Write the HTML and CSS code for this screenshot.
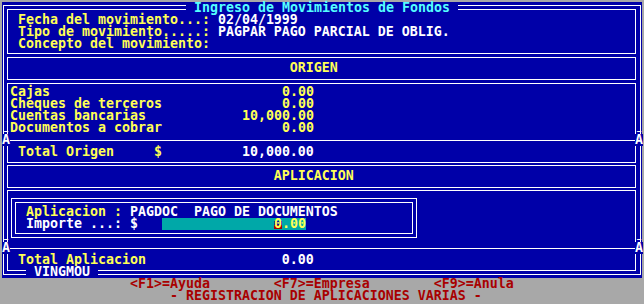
FILE: index.html
```html
<!DOCTYPE html>
<html>
<head>
<meta charset="utf-8">
<link rel="stylesheet" href="styles.css">
</head>
<body>
<div class="screen">
  <div class="main">
    <div class="frame">
      <div class="ttl">Ingreso de Movimientos de Fondos</div>
      <div class="box box-a">
        <div class="ln">  <span class="y">Fecha del movimiento...:</span> 02/04/1999</div>
        <div class="ln">  <span class="y">Tipo de movimiento.....:</span> PAGPAR PAGO PARCIAL DE OBLIG.</div>
        <div class="ln">  <span class="y">Concepto del movimiento:</span></div>
      </div>
      <div class="box box-b">
        <div class="ln y">                                    ORIGEN</div>
      </div>
      <div class="box box-c">
        <div class="ln y items"><span class="lbl">Cajas</span><span class="val">0.00</span></div>
        <div class="ln y items"><span class="lbl">Cheques de terceros</span><span class="val">0.00</span></div>
        <div class="ln y items"><span class="lbl">Cuentas bancarias</span><span class="val">10,000.00</span></div>
        <div class="ln y items"><span class="lbl">Documentos a cobrar</span><span class="val">0.00</span></div>
        <div class="sep"><span class="x">Ã</span><span class="bar"></span><span class="x">Ã</span></div>
        <div class="ln">  <span class="y">Total Origen     $</span>          10,000.00</div>
      </div>
      <div class="box box-d">
        <div class="ln y">                                  APLICACION</div>
      </div>
      <div class="box box-e">
        <div class="nest">
          <div class="nest-in">
            <div class="nl"><span class="y">Aplicacion :</span> PAGDOC  PAGO DE DOCUMENTOS</div>
            <div class="nl">Importe ...: $   <span class="field">              <span class="cur">0</span>.00</span></div>
          </div>
        </div>
        <div class="sep"><span class="x">Ã</span><span class="bar"></span><span class="x">Ã</span></div>
        <div class="ln">  <span class="y">Total Aplicacion</span>                 0.00</div>
      </div>
      <div class="ftl">VINGMOU</div>
    </div>
  </div>
  <div class="status">
    <div class="sl">                &lt;F1&gt;=Ayuda        &lt;F7&gt;=Empresa        &lt;F9&gt;=Anula</div>
    <div class="sl">                     - REGISTRACION DE APLICACIONES VARIAS -</div>
  </div>
</div>
</body>
</html>
```

FILE: styles.css
```css
html, body {
  margin: 0;
  padding: 0;
  background: #a8a8a8;
}

body {
  width: 644px;
  height: 304px;
  overflow: hidden;
  font-family: "DejaVu Sans Mono", "Liberation Mono", monospace;
  font-weight: bold;
  font-size: 13.29px;
  color: #ffffff;
}

.screen {
  width: 640px;
  margin: 2px 0 0 2px;
}

.main {
  background: #0000a8;
  height: 276px;
  box-sizing: border-box;
  padding: 3px 0 0 1px;
}

.frame {
  position: relative;
  width: 638px;
  height: 270px;
  box-sizing: border-box;
  border: 1px solid #ffffff;
  padding: 3px 4px 3px 3px;
}

.ttl,
.ftl {
  position: absolute;
  height: 12px;
  line-height: 12px;
  padding: 0 8px;
  background: #0000a8;
  white-space: pre;
}

.ttl {
  top: -4px;
  left: 182px;
  color: #55ffff;
}

.ftl {
  top: 260px;
  left: 22px;
  color: #ffffff;
}

.box {
  border: 1px solid #ffffff;
}

.box-a {
  padding: 4px 0 3px;
}

.box-b {
  margin-top: 3px;
  padding: 4px 0 5px;
}

.box-c {
  margin-top: 3px;
  padding: 2px 0 4px;
}

.box-d {
  margin-top: 2px;
  padding: 4px 0 5px;
}

.box-e {
  margin-top: 2px;
  padding: 0 0 4px;
}

.ln {
  height: 12px;
  line-height: 12px;
  white-space: pre;
  margin: 0 -8px 0 -6px;
}

.y {
  color: #ffff55;
}

.items {
  padding-left: 8px;
}

.items .lbl {
  display: inline-block;
  width: 232px;
}

.items .val {
  display: inline-block;
  width: 72px;
  text-align: right;
}

.sep {
  display: flex;
  height: 12px;
  line-height: 12px;
  margin: 0 -8px 0 -6px;
}

.sep .x {
  width: 8px;
  text-align: center;
  background: #0000a8;
  color: #ffffff;
}

.sep .bar {
  flex: 1;
  height: 0;
  margin-top: 6px;
  border-top: 1px solid #ffffff;
}

.nest {
  width: 406px;
  box-sizing: border-box;
  margin: 7px 0 4px 3px;
  border: 1px solid #ffffff;
  padding: 3px;
}

.nest-in {
  border: 1px solid #ffffff;
  padding: 3px 0 3px 10px;
}

.nl {
  height: 12px;
  line-height: 12px;
  white-space: pre;
}

.field {
  display: inline-block;
  width: 144px;
  background: #00a8a8;
  color: #ffff55;
}

.cur {
  display: inline-block;
  width: 8px;
  background: linear-gradient(#00a8a8 0 3px, #0000a8 3px 7px, #a80000 7px 11px, #00a8a8 11px);
}

.status {
  height: 24px;
  background: #a8a8a8;
  color: #a80000;
}

.sl {
  height: 12px;
  line-height: 12px;
  white-space: pre;
}
```
